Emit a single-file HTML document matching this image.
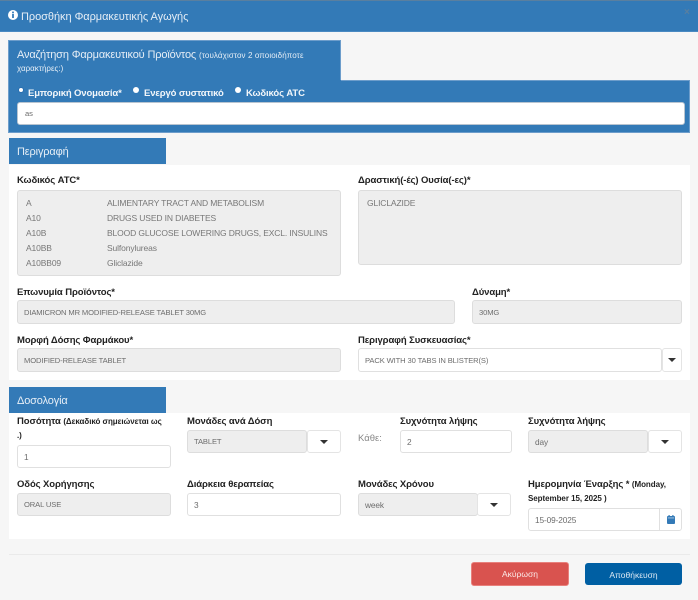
<!DOCTYPE html>
<html lang="el"><head><meta charset="utf-8"><title>Προσθήκη Φαρμακευτικής Αγωγής</title>
<style>
html,body{margin:0;padding:0}
body{width:698px;height:600px;overflow:hidden;position:relative;background:#f6f6f6;font-family:"Liberation Sans","DejaVu Sans",sans-serif;color:#666}
div{position:absolute;box-sizing:border-box}
.b{background:#337ab7}
.w{background:#fff}
.t{white-space:nowrap;line-height:14px}
.l{font-weight:bold;font-size:9.5px;color:#222;white-space:nowrap;line-height:14px;letter-spacing:-.1px}
.l small{font-size:8px;letter-spacing:-.05px}
.tab{color:#e6eef6;font-size:11px;white-space:nowrap;line-height:14px;letter-spacing:-.15px}
.i{border:1px solid #e0e0e0;border-radius:3px;font-size:7.6px;letter-spacing:-.12px;color:#6d6d6d;padding-left:6px;display:flex;align-items:center;background:#fff}
.g{background:#eee;border-color:#ddd}
.btn{border:1px solid #e4e4e4;border-radius:3px;background:#fff}
.btn:after{content:"";position:absolute;left:50%;top:50%;margin:-2px 0 0 -4px;border:4px solid transparent;border-top:4px solid #333;border-bottom:0}
.r{font-size:8.5px;letter-spacing:-.13px;color:#777;white-space:nowrap;line-height:14px}
.rl{font-size:9.5px;font-weight:bold;color:#f2f6fa;letter-spacing:-.13px}
</style></head><body>
<div class="b" style="left:0;top:0;width:698px;height:32px;border-top:1px solid #5a7f9f;border-bottom:1px solid #4a8ac2"></div>
<svg style="position:absolute;left:8px;top:10px" width="10" height="10" viewBox="0 0 10 10"><circle cx="5" cy="5" r="5" fill="#fff"/><rect x="4.1" y="1.6" width="1.8" height="1.7" fill="#337ab7"/><rect x="4.1" y="4" width="1.8" height="4" fill="#337ab7"/></svg>
<div class="t" style="left:21px;top:10px;font-size:11px;color:#e6eef6;letter-spacing:-.05px">Προσθήκη Φαρμακευτικής Αγωγής</div>
<div class="t" style="left:684px;top:6px;font-size:10px;color:#5a7f9f;font-weight:bold">×</div>

<div class="b" style="left:8px;top:40px;width:333px;height:41px;border:1px solid #6d9dcb;border-bottom:0"></div>
<div class="b" style="left:8px;top:80px;width:682px;height:53px;border:1px solid #6d9dcb;border-top:0"></div>
<div class="b" style="left:9px;top:79px;width:331px;height:3px"></div>
<div style="left:341px;top:80px;width:349px;height:1px;background:#6d9dcb"></div>
<div class="tab" style="left:17px;top:48px">Αναζήτηση Φαρμακευτικού Προϊόντος <span style="font-size:8px;letter-spacing:.1px">(τουλάχιστον 2 οποιοιδήποτε</span></div>
<div class="t" style="left:17px;top:62px;font-size:8px;color:#e6eef6">χαρακτήρες:)</div>
<div style="left:18px;top:87px;width:6px;height:6px;border-radius:50%;background:#fff;border:1.5px solid #2a6fb0"></div>
<div class="t rl" style="left:28px;top:87px">Εμπορική Ονομασία*</div>
<div style="left:133px;top:87px;width:6px;height:6px;border-radius:50%;background:#fff"></div>
<div class="t rl" style="left:144px;top:87px">Ενεργό συστατικό</div>
<div style="left:235px;top:87px;width:6px;height:6px;border-radius:50%;background:#fff"></div>
<div class="t rl" style="left:246px;top:87px">Κωδικός ATC</div>
<div class="i" style="left:17px;top:102px;width:668px;height:23px;border-color:#b8c4d0;padding-left:7px">as</div>

<div class="b" style="left:9px;top:138px;width:157px;height:26px"></div>
<div class="tab" style="left:17px;top:145px">Περιγραφή</div>
<div class="w" style="left:9px;top:165px;width:681px;height:215px"></div>

<div class="l" style="left:17px;top:174px">Κωδικός ATC*</div>
<div class="i g" style="left:17px;top:190px;width:324px;height:86px"></div>
<div class="r" style="left:26px;top:196px">A</div><div class="r" style="left:107px;top:196px">ALIMENTARY TRACT AND METABOLISM</div>
<div class="r" style="left:26px;top:211px">A10</div><div class="r" style="left:107px;top:211px">DRUGS USED IN DIABETES</div>
<div class="r" style="left:26px;top:226px">A10B</div><div class="r" style="left:107px;top:226px">BLOOD GLUCOSE LOWERING DRUGS, EXCL. INSULINS</div>
<div class="r" style="left:26px;top:241px">A10BB</div><div class="r" style="left:107px;top:241px">Sulfonylureas</div>
<div class="r" style="left:26px;top:256px">A10BB09</div><div class="r" style="left:107px;top:256px">Gliclazide</div>

<div class="l" style="left:358px;top:174px">Δραστική(-ές) Ουσία(-ες)*</div>
<div class="i g" style="left:358px;top:190px;width:324px;height:75px"></div>
<div class="r" style="left:367px;top:196px">GLICLAZIDE</div>

<div class="l" style="left:17px;top:286px">Επωνυμία Προϊόντος*</div>
<div class="i g" style="left:17px;top:300px;width:438px;height:24px">DIAMICRON MR MODIFIED-RELEASE TABLET 30MG</div>
<div class="l" style="left:472px;top:286px">Δύναμη*</div>
<div class="i g" style="left:472px;top:300px;width:210px;height:24px">30MG</div>
<div class="l" style="left:17px;top:334px">Μορφή Δόσης Φαρμάκου*</div>
<div class="i g" style="left:17px;top:348px;width:324px;height:24px">MODIFIED-RELEASE TABLET</div>
<div class="l" style="left:358px;top:334px">Περιγραφή Συσκευασίας*</div>
<div class="i" style="left:358px;top:348px;width:304px;height:24px">PACK WITH 30 TABS IN BLISTER(S)</div>
<div class="btn" style="left:662px;top:348px;width:20px;height:24px"></div>

<div class="b" style="left:9px;top:387px;width:157px;height:26px"></div>
<div class="tab" style="left:17px;top:394px">Δοσολογία</div>
<div class="w" style="left:9px;top:413px;width:681px;height:126px"></div>

<div class="l" style="left:17px;top:415px">Ποσότητα <small>(Δεκαδικό σημειώνεται ως</small></div>
<div class="l" style="left:17px;top:429px"><small>.)</small></div>
<div class="i" style="left:17px;top:445px;width:154px;height:23px;font-size:8.3px">1</div>
<div class="l" style="left:187px;top:415px">Μονάδες ανά Δόση</div>
<div class="i g" style="left:187px;top:430px;width:120px;height:23px">TABLET</div>
<div class="btn" style="left:307px;top:430px;width:34px;height:23px"></div>
<div class="t" style="left:358px;top:432px;font-size:9.5px;color:#888">Κάθε:</div>
<div class="l" style="left:400px;top:415px">Συχνότητα λήψης</div>
<div class="i" style="left:400px;top:430px;width:112px;height:23px;font-size:8.3px">2</div>
<div class="l" style="left:528px;top:415px">Συχνότητα λήψης</div>
<div class="i g" style="left:528px;top:430px;width:120px;height:23px;font-size:8.3px">day</div>
<div class="btn" style="left:648px;top:430px;width:34px;height:23px"></div>

<div class="l" style="left:17px;top:478px">Οδός Χορήγησης</div>
<div class="i g" style="left:17px;top:493px;width:154px;height:23px">ORAL USE</div>
<div class="l" style="left:187px;top:478px">Διάρκεια θεραπείας</div>
<div class="i" style="left:187px;top:493px;width:154px;height:23px;font-size:8.3px">3</div>
<div class="l" style="left:358px;top:478px">Μονάδες Χρόνου</div>
<div class="i g" style="left:358px;top:493px;width:120px;height:23px;font-size:8.3px">week</div>
<div class="btn" style="left:477px;top:493px;width:34px;height:23px"></div>
<div class="l" style="left:528px;top:478px">Ημερομηνία Έναρξης * <small>(Monday,</small></div>
<div class="l" style="left:528px;top:492px"><small>September 15, 2025 )</small></div>
<div class="i" style="left:528px;top:508px;width:132px;height:23px;border-radius:3px 0 0 3px;font-size:8.3px">15-09-2025</div>
<div class="i" style="left:659px;top:508px;width:23px;height:23px;border-radius:0 3px 3px 0;padding:0"></div>
<svg style="position:absolute;left:667px;top:515px" width="8" height="9" viewBox="0 0 8 9"><rect x="0" y="1" width="8" height="8" rx="1" fill="#337ab7"/><rect x="1.5" y="0" width="1.2" height="2" fill="#337ab7"/><rect x="5.3" y="0" width="1.2" height="2" fill="#337ab7"/><rect x=".8" y="2.6" width="6.4" height=".7" fill="#cfe0ef"/></svg>

<div style="left:9px;top:554px;width:681px;height:1px;background:#eaeaea"></div>
<div class="t" style="left:471px;top:562px;width:98px;height:24px;line-height:23px;text-align:center;background:#d9534f;border:1px solid #e8807c;border-radius:3px;color:#fbe9e8;font-size:8.5px">Ακύρωση</div>
<div class="t" style="left:585px;top:563px;width:97px;height:22px;line-height:24px;text-align:center;background:#005fa3;border-radius:3px;color:#dbe8f3;font-size:8.5px">Αποθήκευση</div>
</body></html>
